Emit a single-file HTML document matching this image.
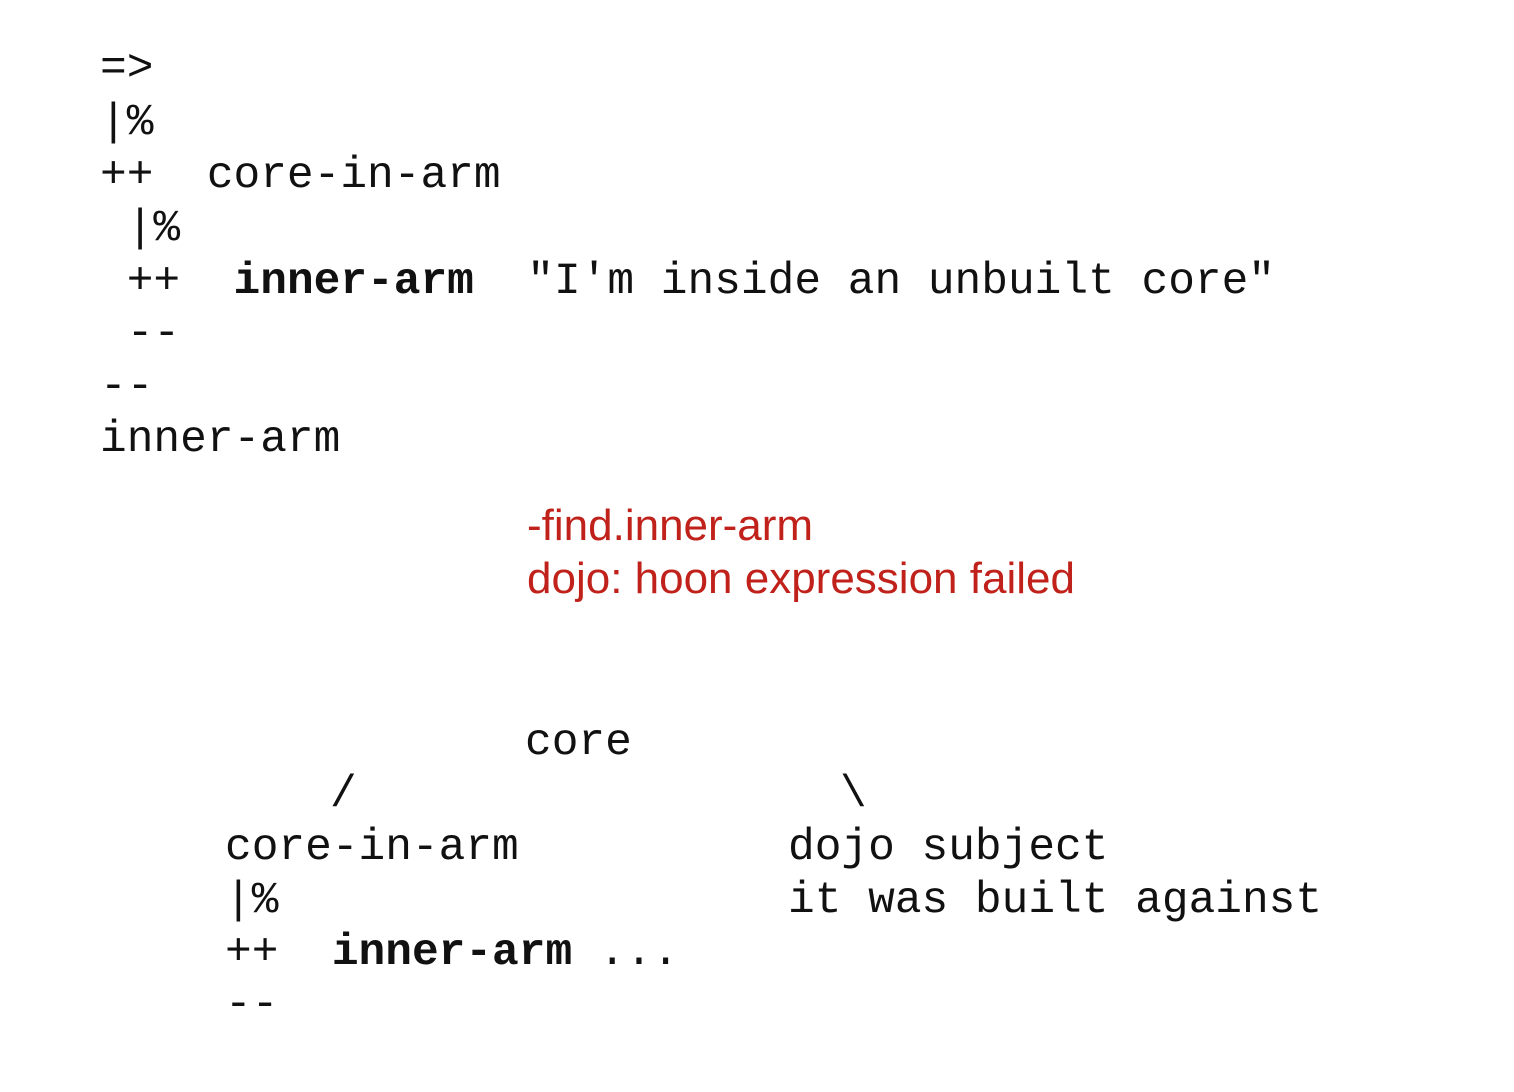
<!DOCTYPE html>
<html><head><meta charset="utf-8"><style>
html,body{margin:0;padding:0;background:#fff;width:1514px;height:1092px;overflow:hidden;position:relative}
.m{position:absolute;font-family:"Liberation Mono","DejaVu Sans Mono",monospace;font-size:44.5px;line-height:53px;height:53px;white-space:pre;color:#111}
.r{position:absolute;font-family:"Liberation Sans",Arial,sans-serif;font-size:44px;line-height:53px;white-space:pre;color:#c0221b}
b{font-weight:bold}
</style></head><body>
<div class="m" style="left:100px;top:43px">=&gt;</div>
<div class="m" style="left:100px;top:97px">|%</div>
<div class="m" style="left:100px;top:150px">++  core-in-arm</div>
<div class="m" style="left:100px;top:203px"> |%</div>
<div class="m" style="left:100px;top:256px"> ++  <b>inner-arm</b>  "I'm inside an unbuilt core"</div>
<div class="m" style="left:100px;top:308px"> --</div>
<div class="m" style="left:100px;top:361px">--</div>
<div class="m" style="left:100px;top:414px">inner-arm</div>
<div class="r" style="left:527px;top:499px">-find.inner-arm</div>
<div class="r" style="left:527px;top:552px">dojo: hoon expression failed</div>
<div class="m" style="left:525px;top:717px">core</div>
<div class="m" style="left:330px;top:769px">/</div>
<div class="m" style="left:840px;top:769px">\</div>
<div class="m" style="left:225px;top:822px">core-in-arm</div>
<div class="m" style="left:788px;top:822px">dojo subject</div>
<div class="m" style="left:225px;top:875px">|%</div>
<div class="m" style="left:788px;top:875px">it was built against</div>
<div class="m" style="left:225px;top:927px">++  <b>inner-arm</b> ...</div>
<div class="m" style="left:225px;top:979px">--</div>
</body></html>
